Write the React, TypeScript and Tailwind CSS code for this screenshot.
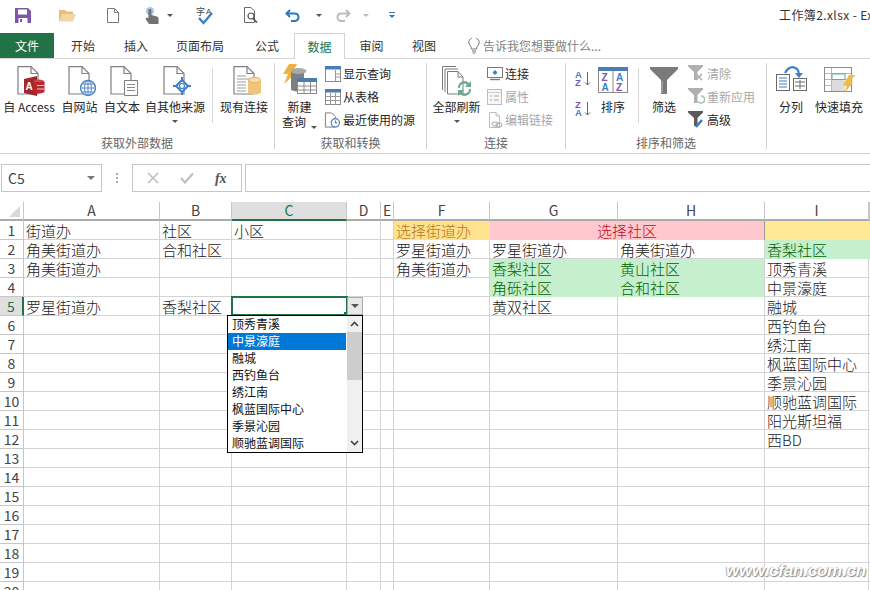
import React from "react";

const Page = ({ children, w = 22, h = 29 }: { children?: React.ReactNode; w?: number; h?: number }) => (
  <>
    <path d={`M1 .6H${w - 8}L${w - 1} 7.5V${h - 1}H1Z`} fill="#fff" stroke="#808080" strokeWidth="1.2" />
    <path d={`M${w - 8} .6V7.5H${w - 1}`} fill="none" stroke="#808080" strokeWidth="1.2" />
    {children}
  </>
);

const IconAccess = () => (
  <svg width="28" height="31" viewBox="0 0 28 31" className="ml-[4px]">
    <Page />
    <path d="M7 13L20 10V30L7 27Z" fill="#a4262c" />
    <ellipse cx="22" cy="16" rx="5.5" ry="2.5" fill="#c8474d" />
    <path d="M17 16H27.5V26Q22 29 17 26Z" fill="#b7292f" />
    <path d="M20 19.5H27M20 23H27" stroke="#f2c6c8" />
    <text x="8.5" y="24" fontSize="10" fontWeight="700" fill="#fff" fontFamily="Liberation Sans">A</text>
  </svg>
);
const IconWeb = () => (
  <svg width="28" height="31" viewBox="0 0 28 31" className="ml-[5px]">
    <Page />
    <circle cx="20" cy="22" r="7.5" fill="#fff" stroke="#4f86c6" strokeWidth="1.4" />
    <ellipse cx="20" cy="22" rx="3.4" ry="7.5" fill="none" stroke="#4f86c6" />
    <path d="M12.5 22H27.5M14 18H26M14 26H26M20 14.5V29.5" stroke="#4f86c6" />
  </svg>
);
const IconText = () => (
  <svg width="28" height="31" viewBox="0 0 28 31" className="ml-[3px]">
    <Page />
    <path d="M14.5 14.5H27.5V29.5H14.5Z" fill="#fff" stroke="#808080" />
    <path d="M17 18.5H25M17 21.5H25M17 24.5H25" stroke="#8a8a8a" />
  </svg>
);
const IconOther = () => (
  <svg width="28" height="31" viewBox="0 0 28 31" className="ml-[4px]">
    <Page />
    <path d="M19 14L25 20L19 26L13 20Z" fill="#fff" stroke="#3b7fc4" strokeWidth="2" />
    <circle cx="19" cy="20" r="2.5" fill="#fff" stroke="#3b7fc4" strokeWidth="1.2" />
    <path d="M19 11V14.5M19 25.5V29M10 20H13.5M24.5 20H28" stroke="#3b7fc4" strokeWidth="2" />
  </svg>
);
const IconExisting = () => (
  <svg width="28" height="31" viewBox="0 0 28 31" className="ml-[5px]">
    <Page />
    <path d="M4 10H13M4 13H18M4 16H13M4 19H13M4 22H13M4 25H13" stroke="#9a9a9a" />
    <path d="M15 14V27Q21.5 30 28 27V14Z" fill="#eec57a" />
    <ellipse cx="21.5" cy="14" rx="6.5" ry="2.6" fill="#f6dca6" stroke="#e3b564" />
  </svg>
);
const IconNewQuery = () => (
  <svg width="34" height="30" viewBox="0 0 34 30" className="mt-[-2px]">
    <path d="M6 0H14L9 9H13L1 20L5 10H0Z" fill="#eeb23d" />
    <path d="M8 7V26Q15 29 21 27V7Z" fill="#7f7f7f" />
    <ellipse cx="15.5" cy="7" rx="8" ry="3" fill="#a8a8a8" />
    <rect x="14.5" y="14.5" width="19" height="15" fill="#fff" stroke="#8a8a8a" />
    <rect x="14" y="14" width="20" height="4" fill="#4a7db5" />
    <path d="M21 18V30M27.5 18V30M15 22H33M15 26H33" stroke="#8a8a8a" />
  </svg>
);
const TableTop = ({ lines }: { lines?: boolean }) => (
  <svg width="16" height="16" viewBox="0 0 16 16">
    <rect x=".5" y=".5" width="15" height="15" fill="#fff" stroke="#8a8a8a" />
    <rect x="0" y="0" width="16" height="3.5" fill="#4a7db5" />
    {lines ? (
      <path d="M5.5 4V16M10.5 4V16M1 7.5H15M1 11.5H15" stroke="#9a9a9a" />
    ) : (
      <path d="M10.5 4V16M11 8H15M11 11H15" stroke="#9a9a9a" />
    )}
  </svg>
);
const IconRecent = () => (
  <svg width="18" height="16" viewBox="0 0 18 16">
    <path d="M1.5 .5H8L12 4.5V15.5H1.5Z" fill="#fff" stroke="#7a7a7a" />
    <circle cx="12" cy="11" r="4.4" fill="#fff" stroke="#4a7db5" strokeWidth="1.2" />
    <path d="M12 8.5V11H14" fill="none" stroke="#555" />
  </svg>
);
const IconRefresh = () => (
  <svg width="30" height="30" viewBox="0 0 30 30">
    <path d="M.5 24V.5H14M3 26V3H16" fill="none" stroke="#7a7a7a" />
    <path d="M5.5 5.5H16L21 11V28H5.5Z" fill="#fff" stroke="#7a7a7a" />
    <path d="M16 5.5V11H21" fill="none" stroke="#7a7a7a" />
    <path d="M16 22A6.5 6.5 0 0 1 27 17L29 15V21H23L25 19A4 4 0 0 0 18 22Z" fill="#6aab8e" />
    <path d="M29 23A6.5 6.5 0 0 1 18 28L16 30V24H22L20 26A4 4 0 0 0 27 23Z" fill="#6aab8e" />
  </svg>
);
const IconConnect = () => (
  <svg width="16" height="14" viewBox="0 0 16 14">
    <rect x=".5" y=".5" width="15" height="10" fill="#fff" stroke="#7a7a7a" />
    <path d="M3 12.5H13" stroke="#7a7a7a" strokeWidth="1.4" />
    <path d="M8 3L10.5 5.5L8 8L5.5 5.5Z" fill="#3b7fc4" />
  </svg>
);
const IconProps = () => (
  <svg width="15" height="16" viewBox="0 0 15 16">
    <rect x=".5" y=".5" width="14" height="15" fill="#f6f6f6" stroke="#bdbdbd" />
    <path d="M1 3.5H14" stroke="#cfcfcf" />
    <path d="M3 7H5M3 11H5M7 7H12M7 11H12" stroke="#a8a8a8" />
  </svg>
);
const IconLinks = () => (
  <svg width="16" height="16" viewBox="0 0 16 16">
    <path d="M2.5 .5H9L12.5 4V15.5H2.5Z" fill="#fff" stroke="#bdbdbd" />
    <path d="M9 .5V4H12.5" fill="none" stroke="#bdbdbd" />
    <rect x="5" y="10" width="6" height="4" rx="2" fill="#fff" stroke="#a8a8a8" />
    <rect x="9" y="11" width="6" height="4" rx="2" fill="none" stroke="#a8a8a8" />
  </svg>
);
const SortSmall = ({ top, bottom, c1, c2 }: { top: string; bottom: string; c1: string; c2: string }) => (
  <svg width="16" height="19" viewBox="0 0 16 19">
    <text x="0" y="8.5" fontSize="9.5" fontWeight="700" fill={c1} fontFamily="Liberation Sans">{top}</text>
    <text x="0" y="17" fontSize="9.5" fontWeight="700" fill={c2} fontFamily="Liberation Sans">{bottom}</text>
    <path d="M12.5 3V16M10 13.5L12.5 16L15 13.5" fill="none" stroke="#666" />
  </svg>
);
const IconSortBig = () => (
  <svg width="30" height="26" viewBox="0 0 30 26" className="mt-px">
    <rect x=".5" y=".5" width="29" height="25" fill="#fff" stroke="#8a8a8a" />
    <rect width="30" height="4" fill="#4a7db5" />
    <path d="M15 4V26" stroke="#8a8a8a" />
    <text x="3.5" y="14" fontSize="10" fontWeight="700" fill="#7e57ab" fontFamily="Liberation Sans">Z</text>
    <text x="3.5" y="24" fontSize="10" fontWeight="700" fill="#3b7fc4" fontFamily="Liberation Sans">A</text>
    <text x="18" y="14" fontSize="10" fontWeight="700" fill="#3b7fc4" fontFamily="Liberation Sans">A</text>
    <text x="18" y="24" fontSize="10" fontWeight="700" fill="#7e57ab" fontFamily="Liberation Sans">Z</text>
  </svg>
);
const IconFilterBig = () => (
  <svg width="28" height="27" viewBox="0 0 28 27" className="mt-px">
    <path d="M0 0H28V2L17 13V27H11V13L0 2Z" fill="#7a7a7a" />
    <path d="M12 14V26" stroke="#b5b5b5" />
  </svg>
);
const FunnelSmall = ({ color, children }: { color: string; children?: React.ReactNode }) => (
  <svg width="17" height="17" viewBox="0 0 17 17">
    <path d="M0 0H15V1.5L9.5 7V15H6V7L0 1.5Z" fill={color} />
    {children}
  </svg>
);
const IconSplit = () => (
  <svg width="31" height="25" viewBox="0 0 31 25">
    <rect x=".5" y="8.5" width="13" height="16" fill="#fff" stroke="#6a6a6a" />
    <path d="M3 12H11M3 15H11M3 18H11M3 21H11" stroke="#3b7fc4" />
    <rect x="17.5" y="12.5" width="13" height="12" fill="#fff" stroke="#6a6a6a" />
    <path d="M19 16H29M19 20H29M24 14V23" stroke="#6a6a6a" />
    <path d="M9 7Q14 -2 21 3Q23 5 23 9" fill="none" stroke="#3b7fc4" strokeWidth="2.2" />
    <path d="M19 7H27L23 12Z" fill="#3b7fc4" />
  </svg>
);
const IconFlash = () => (
  <svg width="31" height="27" viewBox="0 0 31 27" className="mt-px">
    <rect x=".5" y=".5" width="27" height="24" fill="#fff" stroke="#8a8a8a" />
    <path d="M1 6.5H27M1 12.5H27M1 18.5H27M7.5 1V24" stroke="#b8b8b8" />
    <rect x="8" y="7" width="13" height="5.5" fill="#fff" stroke="#6aab8e" />
    <rect x="8" y="13" width="13" height="11" fill="#dcdcdc" />
    <path d="M25 8H31L26 15H29L20 27L23 18H19Z" fill="#f0b94c" />
  </svg>
);

const Caret = () => <span className="inline-block h-0 w-0 border-x-[3px] border-t-[3px] border-x-transparent border-t-[#555]" />;

const Big = ({ w, lines, caret, children }: { w: number; lines: string[]; caret?: boolean; children: React.ReactNode }) => (
  <div className="flex shrink-0 flex-col items-center" style={{ width: w }}>
    <div className="flex h-[36px] items-start justify-center pt-[3px]">{children}</div>
    <div className="whitespace-nowrap text-center text-[12px] leading-[16px] text-[#262626]">
      {lines.map((l, i) => (
        <div key={i} className={i === 0 ? "h-[16px]" : "mt-[-1px] h-[16px]"}>
          {l}
          {i === lines.length - 1 && lines.length > 1 && caret ? <span className="ml-[5px] inline-block align-middle"><Caret /></span> : null}
        </div>
      ))}
    </div>
    {caret && lines.length === 1 ? <div className="mt-[3px] flex h-[6px] items-center"><Caret /></div> : null}
  </div>
);

const Small = ({ icon, label, off, w }: { icon: React.ReactNode; label: string; off?: boolean; w: number }) => (
  <div className="flex h-[23px] items-center whitespace-nowrap text-[12px]">
    <div className="flex shrink-0 justify-center" style={{ width: w }}>{icon}</div>
    <span className={off ? "ml-[2px] text-[#a8a8a8]" : "ml-[2px] text-[#262626]"}>{label}</span>
  </div>
);

const Group = ({ w, label, children }: { w: number; label: string; children: React.ReactNode }) => (
  <div className="flex h-[86px] shrink-0 flex-col border-r border-[#d4d4d4]" style={{ width: w }}>
    <div className="flex h-[72px] items-start">{children}</div>
    <div className="h-[14px] text-center text-[12px] leading-[16px] text-[#666]">{label}</div>
  </div>
);

const Sep = ({ ml, mr }: { ml: number; mr: number }) => <div className="mt-[5px] h-[55px] w-px shrink-0 bg-[#d9d9d9]" style={{ marginLeft: ml, marginRight: mr }} />;

const Qat = ({ w, children }: { w: number; children?: React.ReactNode }) => (
  <div className="flex h-[30px] shrink-0 items-center justify-center" style={{ width: w }}>{children}</div>
);

const cols = ["", "A", "B", "C", "D", "E", "F", "G", "H", "I", ""];

const cellText: Record<string, string> = {
  A1: "街道办", B1: "社区", C1: "小区",
  A2: "角美街道办", B2: "合和社区",
  A3: "角美街道办",
  A5: "罗星街道办", B5: "香梨社区",
  F1: "选择街道办", F2: "罗星街道办", F3: "角美街道办",
  G2: "罗星街道办", H2: "角美街道办",
  G3: "香梨社区", H3: "黄山社区", G4: "角砾社区", H4: "合和社区", G5: "黄双社区",
  I2: "香梨社区", I3: "顶秀青溪", I4: "中景濠庭", I5: "融城", I6: "西钓鱼台", I7: "绣江南",
  I8: "枫蓝国际中心", I9: "季景沁园", I10: "顺驰蓝调国际", I11: "阳光斯坦福", I12: "西BD",
};

const green = new Set(["G3", "H3", "G4", "H4"]);
const listItems = ["顶秀青溪", "中景濠庭", "融城", "西钓鱼台", "绣江南", "枫蓝国际中心", "季景沁园", "顺驰蓝调国际"];

function Cell({ col, row }: { col: string; row: number }) {
  const id = `${col}${row}`;
  const t = cellText[id];
  let cls = "border-r border-b border-[#d4d4d4] text-[#1a1a1a]";
  if (green.has(id)) cls = "bg-[#c6efce] border-b border-[#c6efce] text-[#006100]";
  if (id === "H3" || id === "H4") cls = "bg-[#c6efce] border-b border-r border-[#c6efce] border-r-[#d4d4d4] text-[#006100]";
  if (id === "I2") cls = "bg-[#c6efce] border-b border-[#c6efce] text-[#006100]";
  if (id === "F1") cls = "bg-[#ffe28e] border-b border-[#ffe28e] text-[#b5761a]";
  if (id === "I1") cls = "bg-[#ffe997] border-b border-[#ffe997] text-[#9c5700]";
  return (
    <div className={`relative h-[19px] overflow-visible whitespace-nowrap pl-[2px] text-[15px] leading-[19px] font-light ${cls}`}>
      {t}
      {id === "C5" ? <div className="absolute left-[-1px] top-[-1px] h-[20px] w-[117px] border-2 border-[#217346]"><div className="absolute bottom-[-3px] right-[-3px] h-[5px] w-[5px] bg-[#217346]" /></div> : null}
    </div>
  );
}

export default function App() {
  const rows = Array.from({ length: 20 }, (_, i) => i + 1);
  return (
    <div className="relative h-[590px] w-[870px] overflow-hidden bg-white font-['Noto_Sans_CJK_SC','Noto_Sans',sans-serif]">
      {/* Quick access */}
      <div className="flex h-[33px] items-start">
        <Qat w={45}>
          <svg width="16" height="15" viewBox="0 0 16 15"><path d="M0 0H13L16 3V15H0Z" fill="#7e57ab" /><rect x="3" y="1.5" width="9" height="5" fill="#fff" /><rect x="3.5" y="10" width="9" height="5" fill="#fff" /><rect x="5" y="11" width="2" height="3" fill="#7e57ab" /></svg>
        </Qat>
        <Qat w={45}>
          <svg width="17" height="14" viewBox="0 0 17 14"><path d="M0 2H6L7.5 3.5H14V13H0Z" fill="#e7bf7d" /><path d="M3 6H17L14 13.5H0Z" fill="#f4d6a2" /></svg>
        </Qat>
        <Qat w={45}>
          <svg width="12" height="15" viewBox="0 0 12 15"><path d="M.5 .5H7.5L11.5 4.5V14.5H.5Z" fill="#fff" stroke="#7a7a7a" /><path d="M7.5 .5V4.5H11.5" fill="none" stroke="#7a7a7a" /></svg>
        </Qat>
        <Qat w={47}>
          <svg width="14" height="17" viewBox="0 0 14 17"><circle cx="5" cy="4" r="4" fill="#a9c8e8" /><path d="M3.4 8V2.5Q5 1.4 6.4 2.5V8L12 9.5Q14 10 13.5 12V17H4L.5 12Q1 10 3.4 11Z" fill="#737373" /></svg>
          <span className="ml-[8px] inline-flex"><Caret /></span>
        </Qat>
        <div className="flex h-[30px] w-[46px] shrink-0 items-center justify-center">
          <svg width="18" height="19" viewBox="0 0 18 19"><text x="0" y="9" fontSize="9" fill="#444" fontFamily="Noto Sans CJK SC">字</text><text x="10" y="8" fontSize="8" fill="#444" fontFamily="Liberation Sans">A</text><path d="M3 12L7.5 17L16 7" fill="none" stroke="#3b7fc4" strokeWidth="2.4" /></svg>
        </div>
        <Qat w={46}>
          <svg width="14" height="16" viewBox="0 0 14 16"><path d="M.5 .5H7L10.5 4V15.5H.5Z" fill="#fff" stroke="#6a6a6a" /><circle cx="7" cy="9" r="3" fill="#fff" stroke="#555" strokeWidth="1.2" /><path d="M9 11.5L13 15.5" stroke="#555" strokeWidth="1.6" /></svg>
        </Qat>
        <Qat w={37}>
          <svg width="15" height="13" viewBox="0 0 15 13"><path d="M5 1L1.5 4.5L5 8" fill="none" stroke="#2f77bc" strokeWidth="2" /><path d="M2 4.5H9.5Q13.5 4.5 13.5 8.2T9 12H6" fill="none" stroke="#2f77bc" strokeWidth="2" /></svg>
        </Qat>
        <Qat w={16}><Caret /></Qat>
        <Qat w={32}>
          <svg width="15" height="13" viewBox="0 0 15 13"><path d="M10 1L13.5 4.5L10 8" fill="none" stroke="#bcbcbc" strokeWidth="2" /><path d="M13 4.5H5.5Q1.5 4.5 1.5 8.2T6 12H9" fill="none" stroke="#bcbcbc" strokeWidth="2" /></svg>
        </Qat>
        <Qat w={13}><span className="inline-block h-0 w-0 border-x-[3px] border-t-[3px] border-x-transparent border-t-[#bbb]" /></Qat>
        <Qat w={40}>
          <div className="flex flex-col items-center gap-[2px]"><div className="h-px w-[6px] bg-[#2f77bc]" /><span className="inline-block h-0 w-0 border-x-[3px] border-t-[3px] border-x-transparent border-t-[#2f77bc]" /></div>
        </Qat>
        <div className="ml-auto w-[91px] overflow-hidden whitespace-nowrap pt-[7px] text-[12px] leading-[16px] tracking-[0.4px] text-[#333]">工作簿2.xlsx - Excel</div>
      </div>

      {/* Tabs */}
      <div className="flex h-[26px] items-stretch border-b border-[#d4d4d4] text-[12px] text-[#333]">
        <div className="flex w-[54px] items-center justify-center bg-[#217346] text-white">文件</div>
        <div className="flex w-[58px] items-center justify-center">开始</div>
        <div className="flex w-[48px] items-center justify-center">插入</div>
        <div className="flex w-[80px] items-center justify-center">页面布局</div>
        <div className="flex w-[54px] items-center justify-center">公式</div>
        <div className="z-10 mb-[-1px] flex w-[51px] items-center justify-center border-x border-t border-[#d4d4d4] bg-white text-[#217346]">数据</div>
        <div className="flex w-[53px] items-center justify-center">审阅</div>
        <div className="flex w-[52px] items-center justify-center">视图</div>
        <div className="ml-[17px] flex items-center text-[#7f7f7f]">
          <svg width="14" height="16" viewBox="0 0 14 16" className="mr-[2px]"><path d="M4.5 11Q4.5 9 3 7.5A5 5 0 1 1 11 7.5Q9.5 9 9.5 11Z" fill="none" stroke="#777" /><path d="M5 13H9M5.5 15H8.5" stroke="#777" /></svg>
          告诉我您想要做什么...
        </div>
      </div>

      {/* Ribbon */}
      <div className="flex h-[95px] items-start border-b border-[#d4d4d4] pt-[4px]">
        <Group w={275} label="获取外部数据">
          <Big w={58} lines={["自 Access"]}><IconAccess /></Big>
          <Big w={43} lines={["自网站"]}><IconWeb /></Big>
          <Big w={42} lines={["自文本"]}><IconText /></Big>
          <Big w={64} lines={["自其他来源"]} caret><IconOther /></Big>
          <Sep ml={5} mr={6} />
          <Big w={50} lines={["现有连接"]}><IconExisting /></Big>
        </Group>
        <Group w={152} label="获取和转换">
          <Big w={49} lines={["新建", "查询"]} caret><IconNewQuery /></Big>
          <div className="mt-[-1px] flex flex-col">
            <Small w={17} icon={<TableTop />} label="显示查询" />
            <Small w={17} icon={<TableTop lines />} label="从表格" />
            <Small w={17} icon={<IconRecent />} label="最近使用的源" />
          </div>
        </Group>
        <Group w={139} label="连接">
          <Big w={59} lines={["全部刷新"]} caret><IconRefresh /></Big>
          <div className="mt-[-1px] flex flex-col">
            <Small w={17} icon={<IconConnect />} label="连接" />
            <Small w={17} icon={<IconProps />} label="属性" off />
            <Small w={17} icon={<IconLinks />} label="编辑链接" off />
          </div>
        </Group>
        <Group w={201} label="排序和筛选">
          <div className="ml-[9px] flex w-[20px] shrink-0 flex-col gap-[11px] pt-[6px]">
            <SortSmall top="A" bottom="Z" c1="#3b7fc4" c2="#7e57ab" />
            <SortSmall top="Z" bottom="A" c1="#7e57ab" c2="#3b7fc4" />
          </div>
          <Big w={36} lines={["排序"]}><IconSortBig /></Big>
          <Sep ml={7} mr={0} />
          <Big w={50} lines={["筛选"]}><IconFilterBig /></Big>
          <div className="ml-[-1px] mt-[-1px] flex flex-col">
            <Small w={17} icon={<FunnelSmall color="#b0b0b0"><path d="M8 9L14 15M14 9L8 15" stroke="#b0b0b0" strokeWidth="1.6" /></FunnelSmall>} label="清除" off />
            <Small w={17} icon={<FunnelSmall color="#b0b0b0"><path d="M10 13A3.5 3.5 0 1 0 13 8" fill="none" stroke="#9cc7b2" strokeWidth="1.5" /></FunnelSmall>} label="重新应用" off />
            <Small w={17} icon={<FunnelSmall color="#5a5a5a"><path d="M8 16L14 9" stroke="#3b7fc4" strokeWidth="2.6" /></FunnelSmall>} label="高级" />
          </div>
        </Group>
        <div className="flex h-[72px] shrink-0 items-start">
          <Big w={48} lines={["分列"]}><IconSplit /></Big>
          <Big w={48} lines={["快速填充"]}><IconFlash /></Big>
        </div>
      </div>

      {/* Formula bar */}
      <div className="mt-[10px] flex h-[28px] items-stretch">
        <div className="ml-px flex w-[101px] shrink-0 items-center justify-between border border-[#c6c6c6] px-[6px] text-[14px] text-[#444]">
          C5
          <span className="inline-block h-0 w-0 border-x-[4px] border-t-[4px] border-x-transparent border-t-[#777]" />
        </div>
        <div className="flex w-[30px] shrink-0 flex-col items-center justify-center gap-[2px]">
          <div className="h-[2px] w-[2px] bg-[#aaa]" /><div className="h-[2px] w-[2px] bg-[#aaa]" /><div className="h-[2px] w-[2px] bg-[#aaa]" />
        </div>
        <div className="flex w-[110px] shrink-0 items-center justify-around border border-[#c6c6c6] px-[4px]">
          <svg width="12" height="12" viewBox="0 0 12 12"><path d="M1 1L11 11M11 1L1 11" stroke="#bfbfbf" strokeWidth="1.6" /></svg>
          <svg width="14" height="12" viewBox="0 0 14 12"><path d="M1 6L5 10.5L13 1.5" fill="none" stroke="#bfbfbf" strokeWidth="2.2" /></svg>
          <span className="font-['Liberation_Serif',serif] text-[14px] font-bold italic text-[#555]">fx</span>
        </div>
        <div className="ml-[3px] flex-1 border-y border-l border-[#c6c6c6]" />
      </div>

      {/* Grid */}
      <div className="mt-[10px] grid grid-cols-[24px_136px_72px_115px_34px_13px_96px_128px_147px_104px_1px] auto-rows-[19px]">
        {cols.map((c, i) => (
          <div
            key={i}
            className={
              c === "C"
                ? "h-[19px] border-b-2 border-r border-[#217346] border-r-[#c6c6c6] bg-[#dfdfdf] text-center text-[14px] leading-[17px] text-[#217346]"
                : "relative h-[19px] border-b-2 border-r border-[#c6c6c6] border-b-[#ababab] text-center text-[14px] leading-[17px] text-[#444]"
            }
          >
            {i === 0 ? <div className="absolute bottom-[2px] right-[3px] h-0 w-0 border-b-[11px] border-l-[11px] border-b-[#d8d8d8] border-l-transparent" /> : c}
          </div>
        ))}
        {rows.map((r) => (
          <React.Fragment key={r}>
            <div className={r === 5 ? "h-[19px] border-b border-r-2 border-b-[#c6c6c6] border-r-[#217346] bg-[#dfdfdf] text-center text-[14px] leading-[19px] text-[#217346]" : "h-[19px] border-b border-r border-[#c6c6c6] text-center text-[14px] leading-[19px] text-[#444]"}>{r}</div>
            {cols.slice(1, 7).map((c, i) => <Cell key={i} col={c} row={r} />)}
            {r === 1 ? (
              <div className="col-span-2 h-[19px] border-r border-[#9a9a9a] bg-[#ffc7ce] text-center text-[15px] leading-[19px] font-light text-[#c00d1e]">选择社区</div>
            ) : (
              <>
                <Cell col="G" row={r} />
                <Cell col="H" row={r} />
              </>
            )}
            <Cell col="I" row={r} />
            <div className={r === 1 ? "h-[19px] bg-[#ffe997]" : r === 2 ? "h-[19px] bg-[#c6efce]" : "h-[19px] border-b border-[#d4d4d4]"} />
          </React.Fragment>
        ))}
      </div>

      {/* Dropdown arrow */}
      <div className="absolute left-[347px] top-[297px] flex h-[18px] w-[16px] items-center justify-center border border-[#ababab] bg-[#e8e8e8]">
        <span className="inline-block h-0 w-0 border-x-[4px] border-t-[4px] border-x-transparent border-t-[#555]" />
      </div>

      {/* Validation list */}
      <div className="absolute left-[227px] top-[315px] flex h-[138px] w-[136px] border border-black bg-white text-[12px] leading-[16px] text-[#111]">
        <div className="w-[118px] shrink-0">
          {listItems.map((t, i) => (
            <div key={t} className={i === 1 ? "h-[17px] bg-[#0078d7] pl-[4px] text-white" : "h-[17px] pl-[4px]"}>{t}</div>
          ))}
        </div>
        <div className="ml-px flex flex-1 flex-col bg-[#f0f0f0]">
          <div className="flex h-[16px] items-center justify-center">
            <svg width="9" height="6" viewBox="0 0 9 6"><path d="M1 5L4.5 1.5L8 5" fill="none" stroke="#444" strokeWidth="1.6" /></svg>
          </div>
          <div className="h-[48px] bg-[#cdcdcd]" />
          <div className="flex-1" />
          <div className="flex h-[18px] items-center justify-center">
            <svg width="9" height="6" viewBox="0 0 9 6"><path d="M1 1L4.5 4.5L8 1" fill="none" stroke="#444" strokeWidth="1.6" /></svg>
          </div>
        </div>
      </div>

      {/* Watermark */}
      <div className="absolute left-[726px] top-[561px] font-['Liberation_Sans',sans-serif] text-[17px] font-bold italic leading-[20px] tracking-[-0.2px] text-white [text-shadow:1px_1px_1px_#888,-1px_0_1px_#aaa]">www.cfan.com.cn</div>
    </div>
  );
}
